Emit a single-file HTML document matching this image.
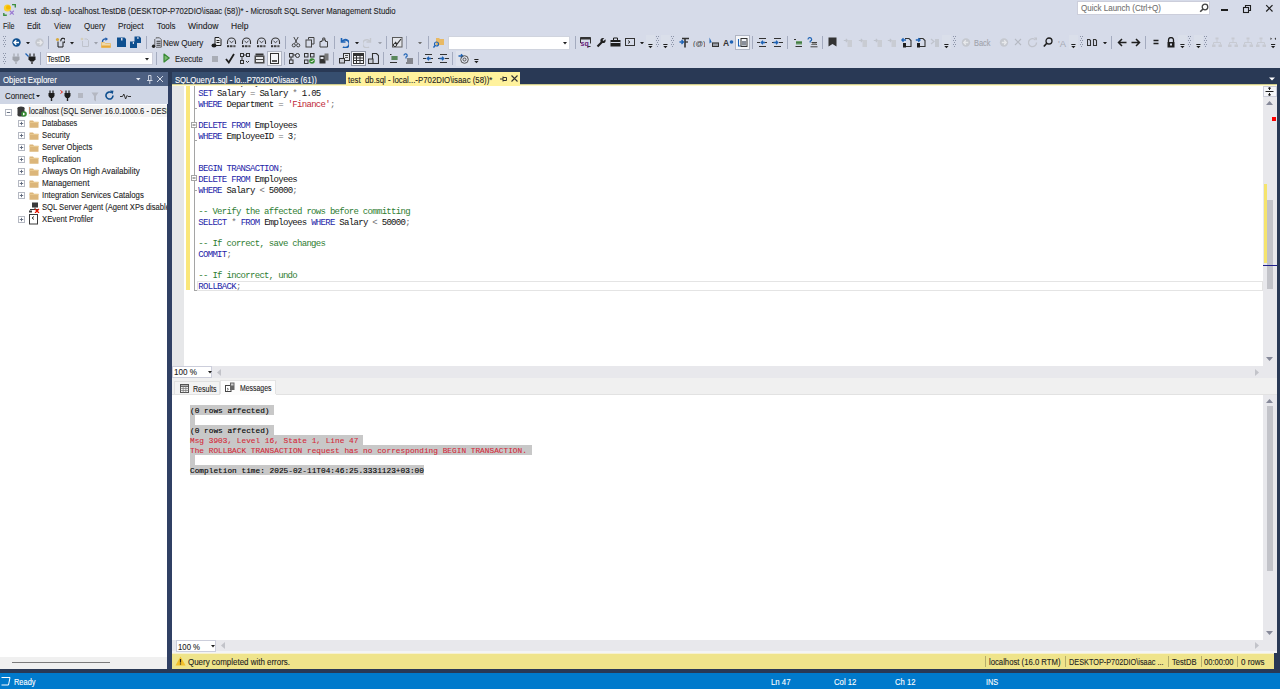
<!DOCTYPE html>
<html><head><meta charset="utf-8">
<style>
*{box-sizing:border-box;margin:0;padding:0}
html,body{width:1280px;height:689px;overflow:hidden;background:#D6DBE9;font-family:'Liberation Sans',sans-serif;position:relative}
.a{position:absolute}
.t{position:absolute;white-space:pre;line-height:1;-webkit-text-stroke:0.1px currentColor}
</style></head>
<body>
<svg class="a" style="left:0px;top:0px;" width="18" height="18" viewBox="0 0 18 18"><circle cx="7.5" cy="8" r="3.6" fill="#F9D030"/><circle cx="8.2" cy="7.4" r="2.2" fill="#F5B800"/><path d="M12 4.6h3.3v3" stroke="#3E8E41" stroke-width="1.4" fill="none"/><path d="M3.8 13v2.3h3" stroke="#3E8E41" stroke-width="1.4" fill="none"/><path d="M9.8 10.8l4 3.8M13.8 10.8l-4 3.8" stroke="#9A7AD2" stroke-width="1.2"/></svg>
<div class="a" style="left:1077px;top:1px;width:133px;height:14px;background:#FFFFFF;border:1px solid #CCCEDB"></div>
<svg class="a" style="left:1199px;top:3px;" width="10" height="10" viewBox="0 0 10 10"><circle cx="6" cy="4" r="2.8" stroke="#424242" stroke-width="1.3" fill="none"/><path d="M4 6 L1.2 8.8" stroke="#424242" stroke-width="1.6"/></svg>
<div class="a" style="left:1221px;top:9px;width:7px;height:2px;background:#1E1E1E;"></div>
<svg class="a" style="left:1242px;top:4px;" width="10" height="10" viewBox="0 0 10 10"><rect x="1.5" y="3.5" width="5" height="5" stroke="#1E1E1E" fill="none" stroke-width="1.1"/><path d="M3.5 3.5v-2h5v5h-2" stroke="#1E1E1E" fill="none" stroke-width="1.1"/></svg>
<svg class="a" style="left:1265px;top:4px;" width="9" height="9" viewBox="0 0 9 9"><path d="M1.2 1.2l6.3 6.3M7.5 1.2l-6.3 6.3" stroke="#1E1E1E" stroke-width="1.2"/></svg>
<svg class="a" style="left:3px;top:36px;" width="3" height="12" viewBox="0 0 3 12"><rect x="0" y="0" width="1" height="1" fill="#8C94A8"/><rect x="2" y="0" width="1" height="1" fill="#8C94A8"/><rect x="1" y="2" width="1" height="1" fill="#8C94A8"/><rect x="1" y="2" width="1" height="1" fill="#8C94A8"/><rect x="0" y="4" width="1" height="1" fill="#8C94A8"/><rect x="2" y="4" width="1" height="1" fill="#8C94A8"/><rect x="1" y="6" width="1" height="1" fill="#8C94A8"/><rect x="1" y="6" width="1" height="1" fill="#8C94A8"/><rect x="0" y="8" width="1" height="1" fill="#8C94A8"/><rect x="2" y="8" width="1" height="1" fill="#8C94A8"/><rect x="1" y="10" width="1" height="1" fill="#8C94A8"/><rect x="1" y="10" width="1" height="1" fill="#8C94A8"/></svg>
<svg class="a" style="left:12px;top:38px;" width="9" height="9" viewBox="0 0 9 9"><circle cx="4.5" cy="4.5" r="4.2" fill="#0E4F8F"/><path d="M2 4.5h5M4.3 2.2L2 4.5l2.3 2.3" stroke="#fff" stroke-width="1.3" fill="none"/></svg>
<svg class="a" style="left:26px;top:41.5px;" width="4" height="2.5" viewBox="0 0 4 2.5"><path d="M0 0h4l-2 2.5z" fill="#1E1E1E"/></svg>
<svg class="a" style="left:35px;top:38px;" width="9" height="9" viewBox="0 0 9 9"><circle cx="4.5" cy="4.5" r="4.2" fill="#C5C8CF"/><path d="M2 4.5h5M4.7 2.2L7 4.5l-2.3 2.3" stroke="#E8E9EC" stroke-width="1.3" fill="none"/></svg>
<div class="a" style="left:48px;top:36px;width:1px;height:13px;background:#A4ABBF;"></div>
<svg class="a" style="left:55px;top:37px;" width="10" height="11" viewBox="0 0 10 11"><circle cx="2.5" cy="2.5" r="1.6" fill="#D9A93A"/><path d="M3 4.5v5.5h5v-5.5" stroke="#1E1E1E" fill="none" stroke-width="1"/><path d="M6 4.2a2.2 2.2 0 1 1 2.6 1.4" stroke="#1E1E1E" fill="none" stroke-width="1.1"/></svg>
<svg class="a" style="left:69.5px;top:42.0px;" width="4" height="2.5" viewBox="0 0 4 2.5"><path d="M0 0h4l-2 2.5z" fill="#1E1E1E"/></svg>
<svg class="a" style="left:80px;top:37px;" width="10" height="11" viewBox="0 0 10 11"><path d="M2.5 4v5.5h6V3.5l-1.5-1.5h-2.5" stroke="#BFC3CC" fill="none" stroke-width="1"/><circle cx="2" cy="2" r="1.3" fill="#D3CDB8"/></svg>
<svg class="a" style="left:93.5px;top:42.0px;" width="4" height="2.5" viewBox="0 0 4 2.5"><path d="M0 0h4l-2 2.5z" fill="#9CA0AA"/></svg>
<svg class="a" style="left:100px;top:37px;" width="12" height="11" viewBox="0 0 12 11"><path d="M1.5 5.5h3l1 1h5v4h-9z" fill="#F0D9A8" stroke="#E8B964" stroke-width="0.8"/><rect x="1.5" y="8.5" width="9" height="2" fill="#E8A838"/><path d="M2.5 5a2.8 2.8 0 0 1 3.5-3" stroke="#1E5AA8" stroke-width="1.4" fill="none"/><path d="M5.5 0.3l2.5 1.8-2.5 1.8z" fill="#1E5AA8"/></svg>
<svg class="a" style="left:117px;top:37px;" width="9" height="10" viewBox="0 0 9 10"><path d="M0 0.5h7.5l1.5 1.5v8H0z" fill="#0E4F8F"/><rect x="4" y="1" width="1.5" height="2.5" fill="#D6DBE9"/></svg>
<svg class="a" style="left:130px;top:36px;" width="11" height="12" viewBox="0 0 11 12"><path d="M4.5 0.5h5l1.5 1.5v5h-6.5z" fill="#0E4F8F"/><rect x="7.3" y="1" width="1.2" height="2" fill="#D6DBE9"/><path d="M0 5.5h5.5l1.5 1.5v5H0z" fill="#0E4F8F"/><rect x="2.8" y="6" width="1.2" height="2" fill="#D6DBE9"/></svg>
<div class="a" style="left:146px;top:36px;width:1px;height:13px;background:#A4ABBF;"></div>
<svg class="a" style="left:151px;top:37px;" width="11" height="11" viewBox="0 0 11 11"><path d="M5 1.5V0.8h3.5l1.8 1.8v7.6H5" stroke="#555" fill="none" stroke-width="0.9"/><path d="M5.5 4.3h4M5.5 6.3h4M5.5 8.3h4" stroke="#333" stroke-width="1.1"/><path d="M3.8 2v7" stroke="#555" stroke-width="0.9"/><circle cx="2.6" cy="9.3" r="1.7" fill="#222"/></svg>
<svg class="a" style="left:211px;top:37px;" width="11" height="11" viewBox="0 0 11 11"><path d="M4 0.5h4l2 2v6H4z" stroke="#1E1E1E" fill="#E8EAEE"/><path d="M5.5 3.5h3M5.5 5.5h3" stroke="#1E1E1E"/><ellipse cx="3" cy="8.5" rx="2.5" ry="2" fill="#1E1E1E"/></svg>
<svg class="a" style="left:226px;top:37px;" width="11" height="11" viewBox="0 0 11 11"><path d="M1.5 7V5a4 4 0 0 1 8 0v2" stroke="#333" fill="none" stroke-width="1.1"/><path d="M3.5 4l2 1.6 2-1.6" stroke="#333" fill="none" stroke-width="0.9"/><rect x="1" y="8.2" width="2.2" height="2" fill="#333"/><rect x="4" y="8.2" width="2.5" height="2" fill="#444"/><rect x="7.3" y="8.2" width="2.2" height="2" fill="#555"/></svg>
<svg class="a" style="left:241px;top:37px;" width="11" height="11" viewBox="0 0 11 11"><path d="M1.5 7V5a4 4 0 0 1 8 0v2" stroke="#333" fill="none" stroke-width="1.1"/><path d="M3.5 4l2 1.6 2-1.6" stroke="#333" fill="none" stroke-width="0.9"/><rect x="1" y="8.2" width="2.2" height="2" fill="#333"/><rect x="4" y="8.2" width="2.5" height="2" fill="#444"/><rect x="7.3" y="8.2" width="2.2" height="2" fill="#555"/></svg>
<svg class="a" style="left:256px;top:37px;" width="11" height="11" viewBox="0 0 11 11"><path d="M1.5 7V5a4 4 0 0 1 8 0v2" stroke="#333" fill="none" stroke-width="1.1"/><path d="M3.5 4l2 1.6 2-1.6" stroke="#333" fill="none" stroke-width="0.9"/><rect x="1" y="8.2" width="2.2" height="2" fill="#333"/><rect x="4" y="8.2" width="2.5" height="2" fill="#444"/><rect x="7.3" y="8.2" width="2.2" height="2" fill="#555"/></svg>
<svg class="a" style="left:270px;top:37px;" width="11" height="11" viewBox="0 0 11 11"><path d="M1.5 7V5a4 4 0 0 1 8 0v2" stroke="#333" fill="none" stroke-width="1.1"/><path d="M3.5 4l2 1.6 2-1.6" stroke="#333" fill="none" stroke-width="0.9"/><rect x="1" y="8.2" width="2.2" height="2" fill="#333"/><rect x="4" y="8.2" width="2.5" height="2" fill="#444"/><rect x="7.3" y="8.2" width="2.2" height="2" fill="#555"/></svg>
<div class="a" style="left:285px;top:36px;width:1px;height:13px;background:#A4ABBF;"></div>
<svg class="a" style="left:291px;top:36px;" width="10" height="12" viewBox="0 0 10 12"><path d="M2.8 1l3.5 6.5M7.2 1L3.7 7.5" stroke="#424242" stroke-width="1"/><circle cx="2.8" cy="9.3" r="1.6" stroke="#424242" fill="none"/><circle cx="7.2" cy="9.3" r="1.6" stroke="#424242" fill="none"/></svg>
<svg class="a" style="left:305px;top:37px;" width="10" height="11" viewBox="0 0 10 11"><path d="M3.5 2.5V0.5h5.5v6.5H7" stroke="#424242" fill="none"/><rect x="1" y="3" width="5.5" height="7" stroke="#424242" fill="none"/></svg>
<svg class="a" style="left:319px;top:37px;" width="10" height="11" viewBox="0 0 10 11"><path d="M1 4.5h2v-1.5h3.5v1.5h2v5.5H1z" stroke="#424242" fill="none"/><path d="M3.8 3V1h2v2" stroke="#424242" fill="none"/></svg>
<div class="a" style="left:334px;top:36px;width:1px;height:13px;background:#A4ABBF;"></div>
<svg class="a" style="left:340px;top:37px;" width="9" height="11" viewBox="0 0 9 11"><path d="M1.5 1v4h4" stroke="#1E63B5" stroke-width="1.6" fill="none"/><path d="M2 4.5a4 4 0 1 1 1 5.5" stroke="#1E63B5" stroke-width="1.8" fill="none"/></svg>
<svg class="a" style="left:355px;top:41.5px;" width="4" height="2.5" viewBox="0 0 4 2.5"><path d="M0 0h4l-2 2.5z" fill="#1E1E1E"/></svg>
<svg class="a" style="left:363px;top:37px;" width="9" height="11" viewBox="0 0 9 11"><path d="M7.5 1v4h-4" stroke="#C5C8CF" stroke-width="1.4" fill="none"/><path d="M7 4.5a4 4 0 1 0-1 5.5" stroke="#C5C8CF" stroke-width="1.4" fill="none"/></svg>
<svg class="a" style="left:378px;top:41.5px;" width="4" height="2.5" viewBox="0 0 4 2.5"><path d="M0 0h4l-2 2.5z" fill="#9CA0AA"/></svg>
<div class="a" style="left:386px;top:36px;width:1px;height:13px;background:#A4ABBF;"></div>
<svg class="a" style="left:392px;top:37px;" width="11" height="11" viewBox="0 0 11 11"><rect x="0.5" y="0.5" width="9.5" height="9.5" stroke="#5A5A5A" fill="#E4E6EB"/><path d="M3 5l2 2 4-5" stroke="#333" stroke-width="1.2" fill="none"/><circle cx="3" cy="8" r="1.6" stroke="#333" fill="none"/></svg>
<div class="a" style="left:406px;top:36px;width:1px;height:13px;background:#A4ABBF;"></div>
<svg class="a" style="left:418px;top:41.5px;" width="4" height="2.5" viewBox="0 0 4 2.5"><path d="M0 0h4l-2 2.5z" fill="#6D6D6D"/></svg>
<div class="a" style="left:428px;top:36px;width:1px;height:13px;background:#A4ABBF;"></div>
<svg class="a" style="left:433px;top:37px;" width="11" height="11" viewBox="0 0 11 11"><path d="M3 1h3l1 1h4v6H3z" fill="#E8B964"/><circle cx="3.5" cy="7" r="2" stroke="#1E63B5" stroke-width="1.2" fill="none"/><path d="M2 8.5L0.5 10.5" stroke="#1E63B5" stroke-width="1.4"/></svg>
<div class="a" style="left:448px;top:35.5px;width:122px;height:14px;background:#FFFFFF;border:1px solid #D0D4DE"></div>
<svg class="a" style="left:563px;top:42.0px;" width="4" height="2.5" viewBox="0 0 4 2.5"><path d="M0 0h4l-2 2.5z" fill="#1E1E1E"/></svg>
<div class="a" style="left:575px;top:36px;width:1px;height:13px;background:#A4ABBF;"></div>
<svg class="a" style="left:580px;top:37px;" width="11" height="11" viewBox="0 0 11 11"><path d="M0.5 6V0.5h10v6" stroke="#333" fill="none"/><rect x="0.5" y="0.5" width="10" height="2" fill="#333"/><text x="0.5" y="9" font-size="7" font-family="Liberation Sans" font-weight="bold" fill="#68217A">sq</text><path d="M7.5 9.5h3" stroke="#333"/></svg>
<svg class="a" style="left:596px;top:37px;" width="10" height="11" viewBox="0 0 10 11"><path d="M1.5 9.5L6 5" stroke="#1E1E1E" stroke-width="2.2"/><circle cx="7" cy="3.5" r="2.6" fill="#1E1E1E"/><path d="M7 3.5l3-3" stroke="#D6DBE9" stroke-width="1.6"/></svg>
<svg class="a" style="left:610px;top:37px;" width="11" height="10" viewBox="0 0 11 10"><rect x="0.5" y="3" width="10" height="6.5" fill="#1E1E1E"/><path d="M3.5 3V1h4v2" stroke="#1E1E1E" fill="none"/><path d="M0.5 5.5h10" stroke="#D6DBE9"/></svg>
<svg class="a" style="left:625px;top:38px;" width="11" height="9" viewBox="0 0 11 9"><rect x="0.5" y="0.5" width="9" height="7" stroke="#333" fill="none"/><path d="M3 2.5l2 1.5-2 1.5" stroke="#333" fill="none"/></svg>
<svg class="a" style="left:640px;top:41.5px;" width="4" height="2.5" viewBox="0 0 4 2.5"><path d="M0 0h4l-2 2.5z" fill="#1E1E1E"/></svg>
<div class="a" style="left:646px;top:35px;width:9px;height:14px;background:#DADFEA;"></div>
<svg class="a" style="left:648px;top:44px;" width="5" height="5" viewBox="0 0 5 5"><rect x="0.3" y="0" width="4.2" height="1" fill="#1E1E1E"/><path d="M0.3 2h4.2l-2.1 2.2z" fill="#1E1E1E"/></svg>
<svg class="a" style="left:656px;top:36px;" width="3" height="12" viewBox="0 0 3 12"><rect x="0" y="0" width="1" height="1" fill="#8C94A8"/><rect x="2" y="0" width="1" height="1" fill="#8C94A8"/><rect x="1" y="2" width="1" height="1" fill="#8C94A8"/><rect x="1" y="2" width="1" height="1" fill="#8C94A8"/><rect x="0" y="4" width="1" height="1" fill="#8C94A8"/><rect x="2" y="4" width="1" height="1" fill="#8C94A8"/><rect x="1" y="6" width="1" height="1" fill="#8C94A8"/><rect x="1" y="6" width="1" height="1" fill="#8C94A8"/><rect x="0" y="8" width="1" height="1" fill="#8C94A8"/><rect x="2" y="8" width="1" height="1" fill="#8C94A8"/><rect x="1" y="10" width="1" height="1" fill="#8C94A8"/><rect x="1" y="10" width="1" height="1" fill="#8C94A8"/></svg>
<div class="a" style="left:661px;top:35px;width:9px;height:14px;background:#DADFEA;"></div>
<svg class="a" style="left:663px;top:44px;" width="5" height="5" viewBox="0 0 5 5"><rect x="0.3" y="0" width="4.2" height="1" fill="#1E1E1E"/><path d="M0.3 2h4.2l-2.1 2.2z" fill="#1E1E1E"/></svg>
<svg class="a" style="left:671px;top:36px;" width="3" height="12" viewBox="0 0 3 12"><rect x="0" y="0" width="1" height="1" fill="#8C94A8"/><rect x="2" y="0" width="1" height="1" fill="#8C94A8"/><rect x="1" y="2" width="1" height="1" fill="#8C94A8"/><rect x="1" y="2" width="1" height="1" fill="#8C94A8"/><rect x="0" y="4" width="1" height="1" fill="#8C94A8"/><rect x="2" y="4" width="1" height="1" fill="#8C94A8"/><rect x="1" y="6" width="1" height="1" fill="#8C94A8"/><rect x="1" y="6" width="1" height="1" fill="#8C94A8"/><rect x="0" y="8" width="1" height="1" fill="#8C94A8"/><rect x="2" y="8" width="1" height="1" fill="#8C94A8"/><rect x="1" y="10" width="1" height="1" fill="#8C94A8"/><rect x="1" y="10" width="1" height="1" fill="#8C94A8"/></svg>
<svg class="a" style="left:679px;top:37px;" width="11" height="11" viewBox="0 0 11 11"><path d="M3 1.5h7M6 1.5v9" stroke="#333" stroke-width="1.6"/><path d="M6 5h3" stroke="#333" stroke-width="1.3"/><path d="M0.5 5h3.5M2.5 3l2 2-2 2" stroke="#1E63B5" stroke-width="1.3" fill="none"/></svg>
<svg class="a" style="left:693px;top:38px;" width="12" height="9" viewBox="0 0 12 9"><text x="0" y="7.5" font-size="7.5" font-family="Liberation Sans" fill="#333">(@)</text></svg>
<svg class="a" style="left:709px;top:37px;" width="11" height="11" viewBox="0 0 11 11"><path d="M0.5 0.5v6l1.8-1.6 1.5 2.5" fill="#1E63B5"/><rect x="3" y="5.5" width="7" height="4.5" fill="#8A8F99" opacity="0.8"/><rect x="3.5" y="6" width="6" height="3.5" stroke="#333" fill="none"/></svg>
<svg class="a" style="left:723px;top:37px;" width="11" height="11" viewBox="0 0 11 11"><text x="0" y="9" font-size="8.5" font-family="Liberation Sans" font-weight="bold" fill="#333">A</text><circle cx="8.5" cy="5" r="1.8" fill="#1E63B5"/></svg>
<div class="a" style="left:735px;top:35px;width:15px;height:15px;background:#F5F6F9;border:1px solid #B0B5C3"></div>
<svg class="a" style="left:737px;top:37px;" width="11" height="11" viewBox="0 0 11 11"><path d="M1.5 2v7h2" stroke="#1E63B5" stroke-width="1.1" fill="none"/><rect x="4" y="1.5" width="6" height="8" stroke="#333" fill="none"/><rect x="5" y="4" width="4" height="4.5" fill="#8A8F99"/></svg>
<div class="a" style="left:752px;top:36px;width:1px;height:13px;background:#A4ABBF;"></div>
<svg class="a" style="left:757px;top:37px;" width="11" height="11" viewBox="0 0 11 11"><path d="M2 1.5h7M0 5.5h3M6 5.5h4M2 9.5h7" stroke="#333" stroke-width="1.1"/><path d="M8 5.5H4.5M6 3.8L4.2 5.5 6 7.2" stroke="#1E63B5" stroke-width="1.3" fill="none"/></svg>
<svg class="a" style="left:772px;top:37px;" width="11" height="11" viewBox="0 0 11 11"><path d="M2 1.5h7M0 5.5h2M7 5.5h4M2 9.5h7" stroke="#333" stroke-width="1.1"/><path d="M1.5 5.5H5.5M4 3.8l1.8 1.7L4 7.2" stroke="#1E63B5" stroke-width="1.3" fill="none"/></svg>
<div class="a" style="left:787px;top:36px;width:1px;height:13px;background:#A4ABBF;"></div>
<svg class="a" style="left:793px;top:37px;" width="10" height="11" viewBox="0 0 10 11"><path d="M1 2.5h2M2.5 9.5h6.5" stroke="#333" stroke-width="1.1"/><rect x="3" y="4" width="6" height="3.5" fill="#6FA36F"/><path d="M3 5.7h6" stroke="#2F5F2F" stroke-width="0.8"/></svg>
<svg class="a" style="left:807px;top:37px;" width="11" height="11" viewBox="0 0 11 11"><path d="M1 2.5a1.8 1.8 0 1 1 2.3 1.7L3 5.5" stroke="#1E63B5" stroke-width="1.2" fill="none"/><path d="M4.5 5.5h5.5M4.5 7.5h5.5M3.5 9.8h7" stroke="#444" stroke-width="1"/><rect x="5" y="6" width="4.5" height="1.5" fill="#999"/></svg>
<div class="a" style="left:822px;top:36px;width:1px;height:13px;background:#A4ABBF;"></div>
<svg class="a" style="left:828px;top:37px;" width="9" height="10" viewBox="0 0 9 10"><path d="M0.5 0.5h8v9L4.5 7l-4 2.5z" fill="#333"/></svg>
<svg class="a" style="left:843px;top:37px;" width="10" height="11" viewBox="0 0 10 11"><path d="M0.8 3.5h3.5M2.8 1.8l1.7 1.7-1.7 1.7" stroke="#BFC3CC" stroke-width="1.1" fill="none"/><rect x="4.5" y="3" width="4.5" height="7" fill="#C9CCD3"/></svg>
<svg class="a" style="left:858px;top:37px;" width="10" height="11" viewBox="0 0 10 11"><path d="M0.8 3.5h3.5M2.8 1.8l1.7 1.7-1.7 1.7" stroke="#BFC3CC" stroke-width="1.1" fill="none"/><rect x="4.5" y="3" width="4.5" height="7" fill="#C9CCD3"/></svg>
<svg class="a" style="left:873px;top:37px;" width="10" height="11" viewBox="0 0 10 11"><path d="M0.8 3.5h3.5M2.8 1.8l1.7 1.7-1.7 1.7" stroke="#BFC3CC" stroke-width="1.1" fill="none"/><rect x="4.5" y="3" width="4.5" height="7" fill="#C9CCD3"/></svg>
<svg class="a" style="left:887px;top:37px;" width="10" height="11" viewBox="0 0 10 11"><path d="M0.8 3.5h3.5M2.8 1.8l1.7 1.7-1.7 1.7" stroke="#BFC3CC" stroke-width="1.1" fill="none"/><rect x="4.5" y="3" width="4.5" height="7" fill="#C9CCD3"/></svg>
<svg class="a" style="left:901px;top:37px;" width="11" height="11" viewBox="0 0 11 11"><path d="M4 1.5h4l2 2v6H5" stroke="#333" fill="none" stroke-width="1.1"/><path d="M5 3H0.8M2.5 1.3L0.8 3l1.7 1.7" stroke="#1E63B5" stroke-width="1.3" fill="none"/><rect x="2" y="6" width="3" height="4.5" fill="#1E1E1E"/></svg>
<svg class="a" style="left:915px;top:37px;" width="11" height="11" viewBox="0 0 11 11"><path d="M4 1.5h4l2 2v6H5" stroke="#333" fill="none" stroke-width="1.1"/><path d="M0.8 3H5M3.3 1.3L5 3 3.3 4.7" stroke="#1E63B5" stroke-width="1.3" fill="none"/><rect x="2" y="6" width="3" height="4.5" fill="#1E1E1E"/></svg>
<svg class="a" style="left:930px;top:37px;" width="10" height="11" viewBox="0 0 10 11"><path d="M1 2l3 2.5L1 7" stroke="#BFC3CC" stroke-width="1.2" fill="none"/><rect x="5" y="2" width="4" height="8" fill="#C4C8D0"/></svg>
<div class="a" style="left:942px;top:35px;width:9px;height:14px;background:#DADFEA;"></div>
<svg class="a" style="left:944px;top:44px;" width="5" height="5" viewBox="0 0 5 5"><rect x="0.3" y="0" width="4.2" height="1" fill="#1E1E1E"/><path d="M0.3 2h4.2l-2.1 2.2z" fill="#1E1E1E"/></svg>
<svg class="a" style="left:953px;top:36px;" width="3" height="12" viewBox="0 0 3 12"><rect x="0" y="0" width="1" height="1" fill="#8C94A8"/><rect x="2" y="0" width="1" height="1" fill="#8C94A8"/><rect x="1" y="2" width="1" height="1" fill="#8C94A8"/><rect x="1" y="2" width="1" height="1" fill="#8C94A8"/><rect x="0" y="4" width="1" height="1" fill="#8C94A8"/><rect x="2" y="4" width="1" height="1" fill="#8C94A8"/><rect x="1" y="6" width="1" height="1" fill="#8C94A8"/><rect x="1" y="6" width="1" height="1" fill="#8C94A8"/><rect x="0" y="8" width="1" height="1" fill="#8C94A8"/><rect x="2" y="8" width="1" height="1" fill="#8C94A8"/><rect x="1" y="10" width="1" height="1" fill="#8C94A8"/><rect x="1" y="10" width="1" height="1" fill="#8C94A8"/></svg>
<svg class="a" style="left:961px;top:37px;" width="11" height="11" viewBox="0 0 11 11"><circle cx="5" cy="5.5" r="4.2" fill="#C5C8CF"/><path d="M2.8 5.5h4.5M4.8 3.3L2.8 5.5l2 2.2" stroke="#E8E9EC" stroke-width="1.3" fill="none"/></svg>
<svg class="a" style="left:999px;top:37px;" width="10" height="11" viewBox="0 0 10 11"><circle cx="5" cy="5.5" r="4.2" fill="#C5C8CF"/><path d="M2.8 5.5h4.5M5.2 3.3l2 2.2-2 2.2" stroke="#E8E9EC" stroke-width="1.3" fill="none"/></svg>
<svg class="a" style="left:1014px;top:38px;" width="8" height="8" viewBox="0 0 8 8"><path d="M1 1l6 6M7 1L1 7" stroke="#B5B9C2" stroke-width="1.1"/></svg>
<svg class="a" style="left:1028px;top:37px;" width="10" height="11" viewBox="0 0 10 11"><path d="M7.5 3a4 4 0 1 0 1 2.5" stroke="#C0C3CB" stroke-width="1.3" fill="none"/><path d="M6 0.5h3v3" fill="#C0C3CB"/></svg>
<svg class="a" style="left:1043px;top:37px;" width="10" height="11" viewBox="0 0 10 11"><circle cx="6" cy="4" r="3" stroke="#1E1E1E" stroke-width="1.3" fill="none"/><path d="M3.8 6.2L0.8 9.5" stroke="#1E1E1E" stroke-width="1.7"/></svg>
<svg class="a" style="left:1058px;top:37px;" width="10" height="11" viewBox="0 0 10 11"><text x="0" y="9.5" font-size="9.5" font-family="Liberation Sans" fill="#A6AAB3">'A</text></svg>
<div class="a" style="left:1069px;top:35px;width:9px;height:14px;background:#DADFEA;"></div>
<svg class="a" style="left:1071px;top:44px;" width="5" height="5" viewBox="0 0 5 5"><rect x="0.3" y="0" width="4.2" height="1" fill="#1E1E1E"/><path d="M0.3 2h4.2l-2.1 2.2z" fill="#1E1E1E"/></svg>
<svg class="a" style="left:1080px;top:36px;" width="3" height="12" viewBox="0 0 3 12"><rect x="0" y="0" width="1" height="1" fill="#8C94A8"/><rect x="2" y="0" width="1" height="1" fill="#8C94A8"/><rect x="1" y="2" width="1" height="1" fill="#8C94A8"/><rect x="1" y="2" width="1" height="1" fill="#8C94A8"/><rect x="0" y="4" width="1" height="1" fill="#8C94A8"/><rect x="2" y="4" width="1" height="1" fill="#8C94A8"/><rect x="1" y="6" width="1" height="1" fill="#8C94A8"/><rect x="1" y="6" width="1" height="1" fill="#8C94A8"/><rect x="0" y="8" width="1" height="1" fill="#8C94A8"/><rect x="2" y="8" width="1" height="1" fill="#8C94A8"/><rect x="1" y="10" width="1" height="1" fill="#8C94A8"/><rect x="1" y="10" width="1" height="1" fill="#8C94A8"/></svg>
<svg class="a" style="left:1087px;top:38px;" width="12" height="9" viewBox="0 0 12 9"><path d="M0.5 1.5h2l1 1v5H0.5zM6.5 1.5h2l1 1v5h-3z" stroke="#333" stroke-width="1.1" fill="none"/></svg>
<svg class="a" style="left:1103px;top:41.5px;" width="4" height="2.5" viewBox="0 0 4 2.5"><path d="M0 0h4l-2 2.5z" fill="#1E1E1E"/></svg>
<div class="a" style="left:1111px;top:36px;width:1px;height:13px;background:#A4ABBF;"></div>
<svg class="a" style="left:1117px;top:38px;" width="10" height="9" viewBox="0 0 10 9"><path d="M9.5 4.5H1.5M5 1L1.5 4.5 5 8" stroke="#1E1E1E" stroke-width="1.5" fill="none"/></svg>
<svg class="a" style="left:1131px;top:38px;" width="10" height="9" viewBox="0 0 10 9"><path d="M0.5 4.5h8M5 1l3.5 3.5L5 8" stroke="#1E1E1E" stroke-width="1.5" fill="none"/></svg>
<div class="a" style="left:1145px;top:36px;width:1px;height:13px;background:#A4ABBF;"></div>
<svg class="a" style="left:1153px;top:39px;" width="6" height="6" viewBox="0 0 6 6"><path d="M0.5 1.5h5M0.5 4.5h5" stroke="#1E1E1E" stroke-width="1.3"/></svg>
<svg class="a" style="left:1167px;top:37px;" width="8" height="11" viewBox="0 0 8 11"><path d="M1.5 5V3a2.5 2.5 0 0 1 5 0v2" stroke="#1E1E1E" stroke-width="1.3" fill="none"/><rect x="0.5" y="5" width="7" height="5.5" fill="#1E1E1E"/><rect x="3" y="6.5" width="2" height="2" fill="#D6DBE9"/></svg>
<div class="a" style="left:1178px;top:35px;width:9px;height:14px;background:#DADFEA;"></div>
<svg class="a" style="left:1180px;top:44px;" width="5" height="5" viewBox="0 0 5 5"><rect x="0.3" y="0" width="4.2" height="1" fill="#1E1E1E"/><path d="M0.3 2h4.2l-2.1 2.2z" fill="#1E1E1E"/></svg>
<svg class="a" style="left:1188px;top:36px;" width="3" height="12" viewBox="0 0 3 12"><rect x="0" y="0" width="1" height="1" fill="#8C94A8"/><rect x="2" y="0" width="1" height="1" fill="#8C94A8"/><rect x="1" y="2" width="1" height="1" fill="#8C94A8"/><rect x="1" y="2" width="1" height="1" fill="#8C94A8"/><rect x="0" y="4" width="1" height="1" fill="#8C94A8"/><rect x="2" y="4" width="1" height="1" fill="#8C94A8"/><rect x="1" y="6" width="1" height="1" fill="#8C94A8"/><rect x="1" y="6" width="1" height="1" fill="#8C94A8"/><rect x="0" y="8" width="1" height="1" fill="#8C94A8"/><rect x="2" y="8" width="1" height="1" fill="#8C94A8"/><rect x="1" y="10" width="1" height="1" fill="#8C94A8"/><rect x="1" y="10" width="1" height="1" fill="#8C94A8"/></svg>
<div class="a" style="left:1194px;top:35px;width:9px;height:14px;background:#DADFEA;"></div>
<svg class="a" style="left:1196px;top:44px;" width="5" height="5" viewBox="0 0 5 5"><rect x="0.3" y="0" width="4.2" height="1" fill="#1E1E1E"/><path d="M0.3 2h4.2l-2.1 2.2z" fill="#1E1E1E"/></svg>
<svg class="a" style="left:1204px;top:36px;" width="3" height="12" viewBox="0 0 3 12"><rect x="0" y="0" width="1" height="1" fill="#8C94A8"/><rect x="2" y="0" width="1" height="1" fill="#8C94A8"/><rect x="1" y="2" width="1" height="1" fill="#8C94A8"/><rect x="1" y="2" width="1" height="1" fill="#8C94A8"/><rect x="0" y="4" width="1" height="1" fill="#8C94A8"/><rect x="2" y="4" width="1" height="1" fill="#8C94A8"/><rect x="1" y="6" width="1" height="1" fill="#8C94A8"/><rect x="1" y="6" width="1" height="1" fill="#8C94A8"/><rect x="0" y="8" width="1" height="1" fill="#8C94A8"/><rect x="2" y="8" width="1" height="1" fill="#8C94A8"/><rect x="1" y="10" width="1" height="1" fill="#8C94A8"/><rect x="1" y="10" width="1" height="1" fill="#8C94A8"/></svg>
<svg class="a" style="left:1212px;top:37px;" width="10" height="11" viewBox="0 0 10 11"><rect x="3.5" y="0.5" width="3" height="2" fill="#C7CAD2"/><path d="M5 2.5v3M1.5 5.5h7M1.5 5.5v2M8.5 5.5v2" stroke="#C7CAD2" fill="none"/><rect x="0" y="7.5" width="3.5" height="2.5" fill="#C7CAD2"/><rect x="6.5" y="7.5" width="3.5" height="2.5" fill="#C7CAD2"/></svg>
<svg class="a" style="left:1228px;top:37px;" width="10" height="11" viewBox="0 0 10 11"><rect x="3.5" y="0.5" width="3" height="2" fill="#C7CAD2"/><path d="M5 2.5v3M1.5 5.5h7M1.5 5.5v2M8.5 5.5v2" stroke="#C7CAD2" fill="none"/><rect x="0" y="7.5" width="3.5" height="2.5" fill="#C7CAD2"/><rect x="6.5" y="7.5" width="3.5" height="2.5" fill="#C7CAD2"/></svg>
<svg class="a" style="left:1243px;top:37px;" width="10" height="11" viewBox="0 0 10 11"><rect x="3.5" y="0.5" width="3" height="2" fill="#C7CAD2"/><path d="M5 2.5v3M1.5 5.5h7M1.5 5.5v2M8.5 5.5v2" stroke="#C7CAD2" fill="none"/><rect x="0" y="7.5" width="3.5" height="2.5" fill="#C7CAD2"/><rect x="6.5" y="7.5" width="3.5" height="2.5" fill="#C7CAD2"/></svg>
<svg class="a" style="left:1256px;top:37px;" width="10" height="11" viewBox="0 0 10 11"><rect x="3.5" y="0.5" width="3" height="2" fill="#C7CAD2"/><path d="M5 2.5v3M1.5 5.5h7M1.5 5.5v2M8.5 5.5v2" stroke="#C7CAD2" fill="none"/><rect x="0" y="7.5" width="3.5" height="2.5" fill="#C7CAD2"/><rect x="6.5" y="7.5" width="3.5" height="2.5" fill="#C7CAD2"/></svg>
<svg class="a" style="left:1270px;top:37px;" width="7" height="12" viewBox="0 0 7 12"><path d="M0.5 0.5l1.5 1.2-1.5 1.2zM6 0.5l-1.5 1.2 1.5 1.2z" fill="#333"/><rect x="1" y="7" width="4.2" height="1" fill="#1E1E1E"/><path d="M1 9h4.2l-2.1 2.2z" fill="#1E1E1E"/></svg>
<svg class="a" style="left:3px;top:53px;" width="3" height="12" viewBox="0 0 3 12"><rect x="0" y="0" width="1" height="1" fill="#8C94A8"/><rect x="2" y="0" width="1" height="1" fill="#8C94A8"/><rect x="1" y="2" width="1" height="1" fill="#8C94A8"/><rect x="1" y="2" width="1" height="1" fill="#8C94A8"/><rect x="0" y="4" width="1" height="1" fill="#8C94A8"/><rect x="2" y="4" width="1" height="1" fill="#8C94A8"/><rect x="1" y="6" width="1" height="1" fill="#8C94A8"/><rect x="1" y="6" width="1" height="1" fill="#8C94A8"/><rect x="0" y="8" width="1" height="1" fill="#8C94A8"/><rect x="2" y="8" width="1" height="1" fill="#8C94A8"/><rect x="1" y="10" width="1" height="1" fill="#8C94A8"/><rect x="1" y="10" width="1" height="1" fill="#8C94A8"/></svg>
<svg class="a" style="left:12px;top:53px;" width="8" height="11" viewBox="0 0 8 11"><path d="M2 0.5v3M6 0.5v3" stroke="#9FA3AC" stroke-width="1.1"/><path d="M0.5 3.5h7v3l-2 2h-3l-2-2z" fill="#9FA3AC"/><path d="M4 8.5v2.5" stroke="#9FA3AC" stroke-width="1.2"/></svg>
<svg class="a" style="left:25px;top:53px;" width="11" height="11" viewBox="0 0 11 11"><path d="M0.5 0.5l3 3" stroke="#1E63B5" stroke-width="1.3"/><path d="M5 0.5v3M9 0.5v3" stroke="#1E1E1E" stroke-width="1.1"/><path d="M3.5 3.5h7v3l-2 2h-3l-2-2z" fill="#1E1E1E"/><path d="M7 8.5v2.5" stroke="#1E1E1E" stroke-width="1.3"/></svg>
<div class="a" style="left:40px;top:52px;width:1px;height:13px;background:#A4ABBF;"></div>
<div class="a" style="left:46px;top:52px;width:107px;height:13px;background:#FFFFFF;border:1px solid #CCCEDB"></div>
<svg class="a" style="left:145px;top:58.0px;" width="4" height="2.5" viewBox="0 0 4 2.5"><path d="M0 0h4l-2 2.5z" fill="#1E1E1E"/></svg>
<div class="a" style="left:156px;top:52px;width:1px;height:13px;background:#A4ABBF;"></div>
<svg class="a" style="left:163px;top:53px;" width="7" height="10" viewBox="0 0 7 10"><path d="M1 1L6.2 5 1 9z" fill="#7BB86F" stroke="#388A34" stroke-width="1.2" stroke-linejoin="round"/></svg>
<div class="a" style="left:212px;top:56px;width:6px;height:6px;background:#A9ADB6;"></div>
<svg class="a" style="left:225px;top:53px;" width="10" height="11" viewBox="0 0 10 11"><path d="M1 6l2.8 3.5L9 1" stroke="#1E1E1E" stroke-width="1.8" fill="none"/></svg>
<svg class="a" style="left:240px;top:53px;" width="10" height="11" viewBox="0 0 10 11"><rect x="0.5" y="0.5" width="3" height="3" stroke="#333" fill="none"/><rect x="6.5" y="0.5" width="3" height="3" stroke="#333" fill="none"/><rect x="0.5" y="7.5" width="3" height="3" stroke="#333" fill="none"/><path d="M2 3.5v4M3.5 2h3" stroke="#333"/><path d="M6 8l1.5 1.5L9 8" stroke="#333" fill="none"/></svg>
<svg class="a" style="left:254px;top:53px;" width="11" height="11" viewBox="0 0 11 11"><rect x="1.5" y="0.5" width="8" height="2" fill="#333"/><rect x="0.5" y="2.5" width="10" height="8" fill="#4A4A4A"/><rect x="2" y="4" width="7" height="2" fill="#E8E9EC"/><rect x="2" y="7" width="7" height="2" fill="#E8E9EC"/></svg>
<div class="a" style="left:267px;top:51px;width:15px;height:15px;background:#F5F6F9;border:1px solid #B0B5C3"></div>
<svg class="a" style="left:269px;top:53px;" width="11" height="11" viewBox="0 0 11 11"><rect x="1.5" y="0.5" width="8" height="10" stroke="#333" fill="none"/><rect x="3" y="7" width="5" height="2" fill="#555"/></svg>
<div class="a" style="left:284px;top:52px;width:1px;height:13px;background:#A4ABBF;"></div>
<svg class="a" style="left:289px;top:53px;" width="11" height="11" viewBox="0 0 11 11"><rect x="0.5" y="0.5" width="3.5" height="3.5" stroke="#333" fill="none"/><rect x="0.5" y="7" width="3.5" height="3.5" stroke="#333" fill="none"/><path d="M2 4v3M4 2h3" stroke="#333"/><circle cx="8.5" cy="2.5" r="2" stroke="#333" fill="none"/></svg>
<svg class="a" style="left:304px;top:53px;" width="11" height="11" viewBox="0 0 11 11"><rect x="0.5" y="0.5" width="3.5" height="3.5" stroke="#333" fill="none"/><rect x="6.5" y="0.5" width="3.5" height="3.5" stroke="#333" fill="none"/><rect x="0.5" y="7" width="3.5" height="3.5" stroke="#333" fill="none"/><circle cx="8" cy="8" r="2.8" fill="#388A34"/><path d="M6.7 8l1 1 1.8-2" stroke="#fff" fill="none"/></svg>
<svg class="a" style="left:319px;top:53px;" width="10" height="11" viewBox="0 0 10 11"><rect x="0.5" y="2.5" width="6" height="8" fill="#333"/><rect x="5.5" y="0.5" width="4" height="7" fill="#777"/><rect x="1.5" y="4" width="3" height="2" fill="#E4E6EB"/></svg>
<div class="a" style="left:333px;top:52px;width:1px;height:13px;background:#A4ABBF;"></div>
<svg class="a" style="left:339px;top:53px;" width="11" height="11" viewBox="0 0 11 11"><rect x="4.5" y="0.5" width="6" height="7" stroke="#333" fill="#E4E6EB"/><path d="M6 2.5h3M6 4.5h3" stroke="#555"/><rect x="0.5" y="5.5" width="5" height="4.5" stroke="#333" fill="#C9CCD4"/></svg>
<div class="a" style="left:351px;top:51px;width:15px;height:15px;background:#F5F6F9;border:1px solid #8D93A3"></div>
<svg class="a" style="left:353px;top:53px;" width="11" height="11" viewBox="0 0 11 11"><rect x="0.5" y="0.5" width="10" height="10" stroke="#333" fill="none"/><rect x="0.5" y="0.5" width="10" height="2.5" fill="#333"/><path d="M0.5 5h10M0.5 7.5h10M3.5 3v7.5M7 3v7.5" stroke="#333"/></svg>
<svg class="a" style="left:368px;top:53px;" width="11" height="11" viewBox="0 0 11 11"><path d="M4.5 0.5h4l2 2v8h-6z" stroke="#333" fill="none" stroke-width="1.1"/><rect x="0.5" y="6" width="4.5" height="4.5" stroke="#333" fill="#C9CCD4"/></svg>
<div class="a" style="left:383px;top:52px;width:1px;height:13px;background:#A4ABBF;"></div>
<svg class="a" style="left:389px;top:53px;" width="9" height="11" viewBox="0 0 9 11"><path d="M1 1.5h1.5M2.5 4h6M2.5 6h6M1 9.5h7" stroke="#333" stroke-width="1.1"/><rect x="2.5" y="3" width="6" height="4" fill="#388A34" opacity="0.55"/></svg>
<svg class="a" style="left:403px;top:53px;" width="11" height="11" viewBox="0 0 11 11"><path d="M1 2.5a1.6 1.6 0 1 1 2 1.5v1.5" stroke="#1E63B5" stroke-width="1.2" fill="none"/><path d="M4 6h6M4 8h6M3 10h7" stroke="#333" stroke-width="1.1"/></svg>
<div class="a" style="left:418px;top:52px;width:1px;height:13px;background:#A4ABBF;"></div>
<svg class="a" style="left:423px;top:53px;" width="11" height="11" viewBox="0 0 11 11"><path d="M2 1.5h7M0 5.5h3M6 5.5h4M2 9.5h7" stroke="#333" stroke-width="1.1"/><path d="M8 5.5H4.5M6 3.8L4.2 5.5 6 7.2" stroke="#1E63B5" stroke-width="1.3" fill="none"/></svg>
<svg class="a" style="left:438px;top:53px;" width="11" height="11" viewBox="0 0 11 11"><path d="M2 1.5h7M0 5.5h2M7 5.5h4M2 9.5h7" stroke="#333" stroke-width="1.1"/><path d="M1.5 5.5H5.5M4 3.8l1.8 1.7L4 7.2" stroke="#1E63B5" stroke-width="1.3" fill="none"/></svg>
<div class="a" style="left:452px;top:52px;width:1px;height:13px;background:#A4ABBF;"></div>
<div class="a" style="left:456px;top:51px;width:14px;height:15px;background:#DEE2EC;"></div>
<svg class="a" style="left:458px;top:53px;" width="11" height="11" viewBox="0 0 11 11"><path d="M0.5 3h4M3 1.2L4.8 3 3 4.8" stroke="#1E63B5" stroke-width="1.3" fill="none"/><circle cx="6.5" cy="6.5" r="3.8" stroke="#555" fill="none"/><circle cx="6.5" cy="6.5" r="1.5" stroke="#555" fill="none"/></svg>
<svg class="a" style="left:474px;top:59px;" width="5" height="5" viewBox="0 0 5 5"><rect x="0.3" y="0" width="4.2" height="1" fill="#1E1E1E"/><path d="M0.3 2h4.2l-2.1 2.2z" fill="#1E1E1E"/></svg>
<div class="a" style="left:0px;top:68px;width:1280px;height:605px;background:#293955;"></div>
<div class="a" style="left:167px;top:86px;width:6px;height:583px;background:#304064;"></div>
<div class="a" style="left:0px;top:72px;width:168px;height:14px;background:#4D6082;"></div>
<svg class="a" style="left:136px;top:77.5px;" width="5" height="3" viewBox="0 0 5 3"><path d="M0 0h4.5l-2.25 2.5z" fill="#E6EAF2"/></svg>
<svg class="a" style="left:146px;top:75px;" width="7" height="10" viewBox="0 0 7 10"><path d="M2.5 0.5h2.5v5h-2.5zM1 5.5h5.5M3.8 5.5v3.5" stroke="#D8DDE8" stroke-width="0.9" fill="none"/></svg>
<svg class="a" style="left:156px;top:75px;" width="8" height="8" viewBox="0 0 8 8"><path d="M1 1l6 6M7 1l-6 6" stroke="#E6EAF2" stroke-width="0.9"/></svg>
<div class="a" style="left:0px;top:86px;width:168px;height:18px;background:#CFD6E5;"></div>
<svg class="a" style="left:36px;top:94.5px;" width="4" height="2.5" viewBox="0 0 4 2.5"><path d="M0 0h4l-2 2.5z" fill="#1E1E1E"/></svg>
<svg class="a" style="left:47.5px;top:90px;" width="7" height="11" viewBox="0 0 7 11"><path d="M2 0.5v3M5 0.5v3" stroke="#1E1E1E" stroke-width="1.2"/><path d="M0.5 3h6v3l-1.5 2h-3L0.5 6z" fill="#1E1E1E"/><path d="M3.5 8v3" stroke="#1E1E1E" stroke-width="1.4"/></svg>
<svg class="a" style="left:60px;top:90px;" width="11" height="11" viewBox="0 0 11 11"><path d="M0.5 0.5l2 1.5-2 1.5" stroke="#E51400" stroke-width="0.9" fill="none"/><path d="M6 0.5v3M9 0.5v3" stroke="#1E1E1E" stroke-width="1.2"/><path d="M4.5 3h6v3l-1.5 2h-3L4.5 6z" fill="#1E1E1E"/><path d="M7.5 8v3" stroke="#1E1E1E" stroke-width="1.4"/></svg>
<div class="a" style="left:78px;top:93px;width:5px;height:5px;background:#B4B8C2;"></div>
<svg class="a" style="left:91px;top:92px;" width="8" height="10" viewBox="0 0 8 10"><path d="M0.5 0.5h7L5 4v5.5L3 8V4z" fill="#B4B8C2"/></svg>
<svg class="a" style="left:105px;top:90px;" width="10" height="11" viewBox="0 0 10 11"><path d="M8 5.5a3.5 3.5 0 1 1-1.2-2.6" stroke="#0E4F8F" stroke-width="1.6" fill="none"/><path d="M5 0.5l3.5 0.3-0.8 3.4z" fill="#0E4F8F"/></svg>
<svg class="a" style="left:120px;top:92px;" width="11" height="8" viewBox="0 0 11 8"><path d="M0 4.5h2.5l1.3-2.5 1.8 5 1.5-3.5 1 1h3" stroke="#333" stroke-width="1" fill="none"/></svg>
<div class="a" style="left:0px;top:104px;width:167px;height:553px;background:#FFFFFF;"></div>
<div class="a" style="left:28px;top:105px;width:139px;height:12px;background:#F4F4F4;"></div>
<svg class="a" style="left:5px;top:109px;" width="7" height="7" viewBox="0 0 7 7"><rect x="0.5" y="0.5" width="6" height="6" stroke="#B4B8C2" fill="#FFFFFF"/><path d="M1.8 3.5h3.4" stroke="#5A6478" stroke-width="0.9"/></svg>
<svg class="a" style="left:17px;top:106px;" width="10" height="11" viewBox="0 0 10 11"><ellipse cx="4" cy="2" rx="3.5" ry="1.6" fill="#3A3A3A"/><rect x="0.5" y="2" width="7" height="7" fill="#3A3A3A"/><ellipse cx="4" cy="9" rx="3.5" ry="1.6" fill="#3A3A3A"/><circle cx="7" cy="8" r="2.8" fill="#388A34"/><path d="M6 6.5v3l2.3-1.5z" fill="#fff"/></svg>
<svg class="a" style="left:18px;top:120px;" width="7" height="7" viewBox="0 0 7 7"><rect x="0.5" y="0.5" width="6" height="6" stroke="#B4B8C2" fill="#FFFFFF"/><path d="M1.8 3.5h3.4" stroke="#5A6478" stroke-width="0.9"/><path d="M3.5 1.8v3.4" stroke="#5A6478" stroke-width="0.9"/></svg>
<svg class="a" style="left:29px;top:119px;" width="10" height="9" viewBox="0 0 10 9"><path d="M0.5 1.5h3.5l1 1.2h4.5v6H0.5z" fill="#DCB67A"/><path d="M0.5 3.5h9" stroke="#E8C88E"/></svg>
<svg class="a" style="left:18px;top:132px;" width="7" height="7" viewBox="0 0 7 7"><rect x="0.5" y="0.5" width="6" height="6" stroke="#B4B8C2" fill="#FFFFFF"/><path d="M1.8 3.5h3.4" stroke="#5A6478" stroke-width="0.9"/><path d="M3.5 1.8v3.4" stroke="#5A6478" stroke-width="0.9"/></svg>
<svg class="a" style="left:29px;top:131px;" width="10" height="9" viewBox="0 0 10 9"><path d="M0.5 1.5h3.5l1 1.2h4.5v6H0.5z" fill="#DCB67A"/><path d="M0.5 3.5h9" stroke="#E8C88E"/></svg>
<svg class="a" style="left:18px;top:144px;" width="7" height="7" viewBox="0 0 7 7"><rect x="0.5" y="0.5" width="6" height="6" stroke="#B4B8C2" fill="#FFFFFF"/><path d="M1.8 3.5h3.4" stroke="#5A6478" stroke-width="0.9"/><path d="M3.5 1.8v3.4" stroke="#5A6478" stroke-width="0.9"/></svg>
<svg class="a" style="left:29px;top:143px;" width="10" height="9" viewBox="0 0 10 9"><path d="M0.5 1.5h3.5l1 1.2h4.5v6H0.5z" fill="#DCB67A"/><path d="M0.5 3.5h9" stroke="#E8C88E"/></svg>
<svg class="a" style="left:18px;top:156px;" width="7" height="7" viewBox="0 0 7 7"><rect x="0.5" y="0.5" width="6" height="6" stroke="#B4B8C2" fill="#FFFFFF"/><path d="M1.8 3.5h3.4" stroke="#5A6478" stroke-width="0.9"/><path d="M3.5 1.8v3.4" stroke="#5A6478" stroke-width="0.9"/></svg>
<svg class="a" style="left:29px;top:155px;" width="10" height="9" viewBox="0 0 10 9"><path d="M0.5 1.5h3.5l1 1.2h4.5v6H0.5z" fill="#DCB67A"/><path d="M0.5 3.5h9" stroke="#E8C88E"/></svg>
<svg class="a" style="left:18px;top:168px;" width="7" height="7" viewBox="0 0 7 7"><rect x="0.5" y="0.5" width="6" height="6" stroke="#B4B8C2" fill="#FFFFFF"/><path d="M1.8 3.5h3.4" stroke="#5A6478" stroke-width="0.9"/><path d="M3.5 1.8v3.4" stroke="#5A6478" stroke-width="0.9"/></svg>
<svg class="a" style="left:29px;top:167px;" width="10" height="9" viewBox="0 0 10 9"><path d="M0.5 1.5h3.5l1 1.2h4.5v6H0.5z" fill="#DCB67A"/><path d="M0.5 3.5h9" stroke="#E8C88E"/></svg>
<svg class="a" style="left:18px;top:180px;" width="7" height="7" viewBox="0 0 7 7"><rect x="0.5" y="0.5" width="6" height="6" stroke="#B4B8C2" fill="#FFFFFF"/><path d="M1.8 3.5h3.4" stroke="#5A6478" stroke-width="0.9"/><path d="M3.5 1.8v3.4" stroke="#5A6478" stroke-width="0.9"/></svg>
<svg class="a" style="left:29px;top:179px;" width="10" height="9" viewBox="0 0 10 9"><path d="M0.5 1.5h3.5l1 1.2h4.5v6H0.5z" fill="#DCB67A"/><path d="M0.5 3.5h9" stroke="#E8C88E"/></svg>
<svg class="a" style="left:18px;top:192px;" width="7" height="7" viewBox="0 0 7 7"><rect x="0.5" y="0.5" width="6" height="6" stroke="#B4B8C2" fill="#FFFFFF"/><path d="M1.8 3.5h3.4" stroke="#5A6478" stroke-width="0.9"/><path d="M3.5 1.8v3.4" stroke="#5A6478" stroke-width="0.9"/></svg>
<svg class="a" style="left:29px;top:191px;" width="10" height="9" viewBox="0 0 10 9"><path d="M0.5 1.5h3.5l1 1.2h4.5v6H0.5z" fill="#DCB67A"/><path d="M0.5 3.5h9" stroke="#E8C88E"/></svg>
<svg class="a" style="left:29px;top:202px;" width="11" height="11" viewBox="0 0 11 11"><rect x="3" y="0.5" width="6" height="5" fill="#3A3A3A"/><path d="M6 5.5v2M1 7.5h8" stroke="#3A3A3A"/><rect x="0" y="8.5" width="3" height="2" fill="#3A3A3A"/><path d="M6 7l4 4M10 7l-4 4" stroke="#E51400" stroke-width="1.2"/></svg>
<svg class="a" style="left:18px;top:216px;" width="7" height="7" viewBox="0 0 7 7"><rect x="0.5" y="0.5" width="6" height="6" stroke="#B4B8C2" fill="#FFFFFF"/><path d="M1.8 3.5h3.4" stroke="#5A6478" stroke-width="0.9"/><path d="M3.5 1.8v3.4" stroke="#5A6478" stroke-width="0.9"/></svg>
<svg class="a" style="left:29px;top:214px;" width="10" height="11" viewBox="0 0 10 11"><rect x="0.5" y="0.5" width="8" height="9.5" stroke="#3A3A3A" fill="#fff"/><path d="M5 2.5L3 4l2 1.5" stroke="#3A3A3A" fill="none"/></svg>
<div class="a" style="left:0px;top:657px;width:167px;height:12px;background:#F0F0F0;"></div>
<div class="a" style="left:12px;top:662px;width:98px;height:1px;background:#7A7A7A;"></div>
<div class="a" style="left:172px;top:72px;width:174px;height:12px;background:#364E6F;"></div>
<div class="a" style="left:346px;top:72px;width:174px;height:14px;background:#FFF29D;"></div>
<svg class="a" style="left:499px;top:75px;" width="9" height="8" viewBox="0 0 9 8"><path d="M1 4h3M4 1.5v5M4 2.5h3.5v3H4" stroke="#333" fill="none"/></svg>
<svg class="a" style="left:510px;top:74px;" width="9" height="9" viewBox="0 0 9 9"><path d="M1.5 1.5l6 6M7.5 1.5l-6 6" stroke="#333" stroke-width="1.1"/></svg>
<svg class="a" style="left:1268px;top:76px;" width="8" height="6" viewBox="0 0 8 6"><path d="M1 1.5h6l-3 3z" fill="#FFFFFF"/></svg>
<div class="a" style="left:172px;top:84px;width:1105px;height:1px;background:#CFCB8E;"></div>
<div class="a" style="left:172px;top:85px;width:1105px;height:1px;background:#FFF8C8;"></div>
<div class="a" style="left:346px;top:84px;width:174px;height:2px;background:#FFF29D;"></div>
<div class="a" style="left:172px;top:86px;width:1105px;height:280px;background:#FFFFFF;"></div>
<div class="a" style="left:172px;top:86px;width:12px;height:280px;background:#E6E7E9;"></div>
<div class="a" style="left:186px;top:86px;width:4px;height:204px;background:#FAE77C;"></div>
<div class="a" style="left:194px;top:86px;width:1px;height:204px;background:#A5A5A5;"></div>
<div class="a" style="left:1263px;top:86px;width:14px;height:280px;background:#E8E8EC;"></div>
<div class="a" style="left:1263px;top:86px;width:14px;height:11px;background:#F5F6F9;border:1px solid #CCCEDB"></div>
<svg class="a" style="left:1265px;top:87px;" width="9" height="9" viewBox="0 0 9 9"><path d="M0.5 4.5h8M4.5 0.5v2.5M4.5 6v2.5M3 1.5l1.5-1 1.5 1M3 7.5l1.5 1 1.5-1" stroke="#1E1E1E" fill="none"/></svg>
<svg class="a" style="left:1266px;top:101px;" width="7" height="4" viewBox="0 0 7 4"><path d="M0 4l3.5-4L7 4z" fill="#868999"/></svg>
<div class="a" style="left:1272px;top:117px;width:4px;height:4px;background:#FF0000;"></div>
<div class="a" style="left:1264px;top:184px;width:3px;height:79px;background:#F5E46E;"></div>
<div class="a" style="left:1267px;top:200px;width:6px;height:89px;background:#C2C3C9;"></div>
<div class="a" style="left:1263px;top:265px;width:14px;height:1px;background:#1E1E8C;"></div>
<svg class="a" style="left:1266px;top:357px;" width="7" height="4" viewBox="0 0 7 4"><path d="M0 0l3.5 4L7 0z" fill="#868999"/></svg>
<svg class="a" style="left:191px;top:122px;" width="7" height="7" viewBox="0 0 7 7"><rect x="0.5" y="0.5" width="5" height="5" stroke="#A5A5A5" fill="#FFFFFF"/><path d="M1.5 3h3" stroke="#555"/></svg>
<svg class="a" style="left:191px;top:175px;" width="7" height="7" viewBox="0 0 7 7"><rect x="0.5" y="0.5" width="5" height="5" stroke="#A5A5A5" fill="#FFFFFF"/><path d="M1.5 3h3" stroke="#555"/></svg>
<div class="a" style="left:197px;top:280.5px;width:1066px;height:10.5px;background:transparent;border:1px solid #E4E4E4"></div>
<div class="a" style="left:194px;top:290px;width:3px;height:1px;background:#A5A5A5;"></div>
<div class="a" style="left:194px;top:108px;width:3px;height:1px;background:#A5A5A5;"></div>
<div class="a" style="left:194px;top:140px;width:3px;height:1px;background:#A5A5A5;"></div>
<div class="a" style="left:194px;top:190px;width:3px;height:1px;background:#A5A5A5;"></div>
<div class="a" style="left:172px;top:86px;width:1090px;height:10px;overflow:hidden">
<div class="t" style="left:26.3px;top:-6.62px;font-family:'Liberation Mono',monospace;font-size:9px;letter-spacing:-0.7px;line-height:1;-webkit-text-stroke:0"><span style="color:#1E1EA8">UPDATE</span> Employees</div>
</div>
<div class="t" style="left:198.3px;top:90.10px;font-family:'Liberation Mono',monospace;font-size:9px;letter-spacing:-0.7px;line-height:1;-webkit-text-stroke:0"><span style="color:#1E1EA8">SET</span><span style="color:#111111"> Salary </span><span style="color:#707070">=</span><span style="color:#111111"> Salary </span><span style="color:#707070">*</span><span style="color:#111111"> 1.05</span></div>
<div class="t" style="left:198.3px;top:100.82px;font-family:'Liberation Mono',monospace;font-size:9px;letter-spacing:-0.7px;line-height:1;-webkit-text-stroke:0"><span style="color:#1E1EA8">WHERE</span><span style="color:#111111"> Department </span><span style="color:#707070">=</span><span style="color:#111111"> </span><span style="color:#C02838">&#x27;Finance&#x27;</span><span style="color:#707070">;</span></div>
<div class="t" style="left:198.3px;top:122.26px;font-family:'Liberation Mono',monospace;font-size:9px;letter-spacing:-0.7px;line-height:1;-webkit-text-stroke:0"><span style="color:#1E1EA8">DELETE</span><span style="color:#111111"> </span><span style="color:#1E1EA8">FROM</span><span style="color:#111111"> Employees</span></div>
<div class="t" style="left:198.3px;top:132.98px;font-family:'Liberation Mono',monospace;font-size:9px;letter-spacing:-0.7px;line-height:1;-webkit-text-stroke:0"><span style="color:#1E1EA8">WHERE</span><span style="color:#111111"> EmployeeID </span><span style="color:#707070">=</span><span style="color:#111111"> 3</span><span style="color:#707070">;</span></div>
<div class="t" style="left:198.3px;top:165.14px;font-family:'Liberation Mono',monospace;font-size:9px;letter-spacing:-0.7px;line-height:1;-webkit-text-stroke:0"><span style="color:#1E1EA8">BEGIN</span><span style="color:#111111"> </span><span style="color:#1E1EA8">TRANSACTION</span><span style="color:#707070">;</span></div>
<div class="t" style="left:198.3px;top:175.86px;font-family:'Liberation Mono',monospace;font-size:9px;letter-spacing:-0.7px;line-height:1;-webkit-text-stroke:0"><span style="color:#1E1EA8">DELETE</span><span style="color:#111111"> </span><span style="color:#1E1EA8">FROM</span><span style="color:#111111"> Employees</span></div>
<div class="t" style="left:198.3px;top:186.58px;font-family:'Liberation Mono',monospace;font-size:9px;letter-spacing:-0.7px;line-height:1;-webkit-text-stroke:0"><span style="color:#1E1EA8">WHERE</span><span style="color:#111111"> Salary </span><span style="color:#707070">&lt;</span><span style="color:#111111"> 50000</span><span style="color:#707070">;</span></div>
<div class="t" style="left:198.3px;top:208.02px;font-family:'Liberation Mono',monospace;font-size:9px;letter-spacing:-0.7px;line-height:1;-webkit-text-stroke:0"><span style="color:#2E7D32">-- Verify the affected rows before committing</span></div>
<div class="t" style="left:198.3px;top:218.74px;font-family:'Liberation Mono',monospace;font-size:9px;letter-spacing:-0.7px;line-height:1;-webkit-text-stroke:0"><span style="color:#1E1EA8">SELECT</span><span style="color:#111111"> </span><span style="color:#707070">*</span><span style="color:#111111"> </span><span style="color:#1E1EA8">FROM</span><span style="color:#111111"> Employees </span><span style="color:#1E1EA8">WHERE</span><span style="color:#111111"> Salary </span><span style="color:#707070">&lt;</span><span style="color:#111111"> 50000</span><span style="color:#707070">;</span></div>
<div class="t" style="left:198.3px;top:240.18px;font-family:'Liberation Mono',monospace;font-size:9px;letter-spacing:-0.7px;line-height:1;-webkit-text-stroke:0"><span style="color:#2E7D32">-- If correct, save changes</span></div>
<div class="t" style="left:198.3px;top:250.90px;font-family:'Liberation Mono',monospace;font-size:9px;letter-spacing:-0.7px;line-height:1;-webkit-text-stroke:0"><span style="color:#1E1EA8">COMMIT</span><span style="color:#707070">;</span></div>
<div class="t" style="left:198.3px;top:272.34px;font-family:'Liberation Mono',monospace;font-size:9px;letter-spacing:-0.7px;line-height:1;-webkit-text-stroke:0"><span style="color:#2E7D32">-- If incorrect, undo</span></div>
<div class="t" style="left:198.3px;top:283.06px;font-family:'Liberation Mono',monospace;font-size:9px;letter-spacing:-0.7px;line-height:1;-webkit-text-stroke:0"><span style="color:#1E1EA8">ROLLBACK</span><span style="color:#707070">;</span></div>
<div class="a" style="left:172px;top:366px;width:1105px;height:12px;background:#E8E8EC;"></div>
<div class="a" style="left:172px;top:366px;width:40px;height:12px;background:#FFFFFF;border:1px solid #CCCEDB"></div>
<svg class="a" style="left:207.5px;top:371px;" width="4" height="2.5" viewBox="0 0 4 2.5"><path d="M0 0h4l-2 2.5z" fill="#1E1E1E"/></svg>
<svg class="a" style="left:217px;top:369px;" width="4" height="7" viewBox="0 0 4 7"><path d="M4 0v7L0 3.5z" fill="#C2C3C9"/></svg>
<svg class="a" style="left:1255px;top:369px;" width="4" height="7" viewBox="0 0 4 7"><path d="M0 0v7l4-3.5z" fill="#C2C3C9"/></svg>
<div class="a" style="left:172px;top:378px;width:1105px;height:17px;background:#F0F0F0;"></div>
<div class="a" style="left:174px;top:381px;width:46px;height:14px;background:#F3F3F3;border:1px solid #E0E0E0;border-bottom:none"></div>
<svg class="a" style="left:180px;top:384px;" width="9" height="9" viewBox="0 0 9 9"><rect x="0.5" y="0.5" width="8" height="8" stroke="#555" fill="none"/><path d="M0.5 2.2h8" stroke="#444" stroke-width="1.2"/><path d="M0.5 4.5h8M0.5 6.5h8M3.2 2v6.5M5.8 2v6.5" stroke="#777" stroke-width="0.7"/></svg>
<div class="a" style="left:220px;top:380px;width:56px;height:15px;background:#FCFCFC;border:1px solid #E3E3E3;border-bottom:none"></div>
<svg class="a" style="left:225px;top:382px;" width="10" height="10" viewBox="0 0 10 10"><rect x="0.5" y="3.5" width="5.5" height="6" stroke="#444" fill="#fff"/><rect x="5" y="0.5" width="4.5" height="7.5" fill="#666"/><rect x="6" y="1.5" width="2.5" height="2" fill="#ccc"/><path d="M2 6l1.5 1.2L2 8.4" stroke="#444" fill="none" stroke-width="0.8"/></svg>
<div class="a" style="left:172px;top:394px;width:1105px;height:1px;background:#E2E2E2;"></div>
<div class="a" style="left:220px;top:394px;width:56px;height:1px;background:#FCFCFC;"></div>
<div class="a" style="left:172px;top:395px;width:1105px;height:245px;background:#FFFFFF;"></div>
<div class="a" style="left:1263px;top:395px;width:14px;height:245px;background:#E8E8EC;"></div>
<svg class="a" style="left:1266px;top:399px;" width="7" height="4" viewBox="0 0 7 4"><path d="M0 4l3.5-4L7 4z" fill="#868999"/></svg>
<div class="a" style="left:1267px;top:406px;width:6px;height:165px;background:#C2C3C9;"></div>
<svg class="a" style="left:1266px;top:631px;" width="7" height="4" viewBox="0 0 7 4"><path d="M0 0l3.5 4L7 0z" fill="#868999"/></svg>
<div class="a" style="left:190px;top:405px;width:84px;height:10px;background:#C8C8C8;"></div>
<div class="t" style="left:190px;top:407.70px;font-family:'Liberation Mono',monospace;font-size:7.8px;color:#000000;line-height:1;-webkit-text-stroke:0.1px currentColor">(0 rows affected)</div>
<div class="a" style="left:190px;top:415px;width:5px;height:10px;background:#C8C8C8;"></div>
<div class="a" style="left:190px;top:425px;width:84px;height:10px;background:#C8C8C8;"></div>
<div class="t" style="left:190px;top:427.70px;font-family:'Liberation Mono',monospace;font-size:7.8px;color:#000000;line-height:1;-webkit-text-stroke:0.1px currentColor">(0 rows affected)</div>
<div class="a" style="left:190px;top:435px;width:173px;height:10px;background:#C8C8C8;"></div>
<div class="t" style="left:190px;top:437.70px;font-family:'Liberation Mono',monospace;font-size:7.8px;color:#D42A3A;line-height:1;-webkit-text-stroke:0.1px currentColor">Msg 3903, Level 16, State 1, Line 47</div>
<div class="a" style="left:190px;top:445px;width:342px;height:10px;background:#C8C8C8;"></div>
<div class="t" style="left:190px;top:447.70px;font-family:'Liberation Mono',monospace;font-size:7.8px;color:#D42A3A;line-height:1;-webkit-text-stroke:0.1px currentColor">The ROLLBACK TRANSACTION request has no corresponding BEGIN TRANSACTION.</div>
<div class="a" style="left:190px;top:455px;width:5px;height:10px;background:#C8C8C8;"></div>
<div class="a" style="left:190px;top:465px;width:234px;height:10px;background:#C8C8C8;"></div>
<div class="t" style="left:190px;top:467.70px;font-family:'Liberation Mono',monospace;font-size:7.8px;color:#000000;line-height:1;-webkit-text-stroke:0.1px currentColor">Completion time: 2025-02-11T04:46:25.3331123+03:00</div>
<div class="a" style="left:172px;top:640px;width:1105px;height:11px;background:#E8E8EC;"></div>
<div class="a" style="left:172px;top:651px;width:1105px;height:2px;background:#F3F4F5;"></div>
<div class="a" style="left:176px;top:640px;width:40px;height:12px;background:#FFFFFF;border:1px solid #CCCEDB"></div>
<svg class="a" style="left:210.5px;top:645px;" width="4" height="2.5" viewBox="0 0 4 2.5"><path d="M0 0h4l-2 2.5z" fill="#1E1E1E"/></svg>
<svg class="a" style="left:221px;top:642px;" width="4" height="7" viewBox="0 0 4 7"><path d="M4 0v7L0 3.5z" fill="#C2C3C9"/></svg>
<svg class="a" style="left:1255px;top:642px;" width="4" height="7" viewBox="0 0 4 7"><path d="M0 0v7l4-3.5z" fill="#C2C3C9"/></svg>
<div class="a" style="left:172px;top:653px;width:1102px;height:16px;background:#EFE48B;"></div>
<div class="a" style="left:172px;top:653px;width:1102px;height:1px;background:#F7F1CF;"></div>
<svg class="a" style="left:175px;top:656px;" width="11" height="10" viewBox="0 0 11 10"><path d="M5.5 0.5L10.5 9.5H0.5z" fill="#F2C029"/><path d="M5.5 3v3.5M5.5 7.5v1" stroke="#1E1E1E" stroke-width="1.2"/></svg>
<div class="a" style="left:985px;top:656px;width:1px;height:11px;background:#B5AD6A;"></div>
<div class="a" style="left:1065px;top:656px;width:1px;height:11px;background:#B5AD6A;"></div>
<div class="a" style="left:1168px;top:656px;width:1px;height:11px;background:#B5AD6A;"></div>
<div class="a" style="left:1201px;top:656px;width:1px;height:11px;background:#B5AD6A;"></div>
<div class="a" style="left:1237px;top:656px;width:1px;height:11px;background:#B5AD6A;"></div>
<div class="a" style="left:0px;top:673px;width:1280px;height:16px;background:#007ACC;"></div>
<svg class="a" style="left:1px;top:676px;" width="10" height="10" viewBox="0 0 10 10"><path d="M0.5 1.5h8.5l-1.5 7.5H0.5" stroke="#FFFFFF" fill="none"/></svg>
<div class="t" style="left:23.70px;top:7.15px;font-family:'Liberation Sans',sans-serif;font-size:8.8px;color:#1E1E1E;transform:scaleX(0.8795);transform-origin:0 0;">test  db.sql - localhost.TestDB (DESKTOP-P702DIO\isaac (58))* - Microsoft SQL Server Management Studio</div>
<div class="t" style="left:1080.70px;top:4.42px;font-family:'Liberation Sans',sans-serif;font-size:8.6px;color:#717171;transform:scaleX(0.9331);transform-origin:0 0;">Quick Launch (Ctrl+Q)</div>
<div class="t" style="left:2.70px;top:22.32px;font-family:'Liberation Sans',sans-serif;font-size:8.6px;color:#1E1E1E;transform:scaleX(0.8298);transform-origin:0 0;">File</div>
<div class="t" style="left:26.70px;top:22.32px;font-family:'Liberation Sans',sans-serif;font-size:8.6px;color:#1E1E1E;transform:scaleX(0.9114);transform-origin:0 0;">Edit</div>
<div class="t" style="left:53.70px;top:22.32px;font-family:'Liberation Sans',sans-serif;font-size:8.6px;color:#1E1E1E;transform:scaleX(0.9197);transform-origin:0 0;">View</div>
<div class="t" style="left:83.70px;top:22.32px;font-family:'Liberation Sans',sans-serif;font-size:8.6px;color:#1E1E1E;transform:scaleX(0.9186);transform-origin:0 0;">Query</div>
<div class="t" style="left:118.20px;top:22.32px;font-family:'Liberation Sans',sans-serif;font-size:8.6px;color:#1E1E1E;transform:scaleX(0.9533);transform-origin:0 0;">Project</div>
<div class="t" style="left:156.70px;top:22.32px;font-family:'Liberation Sans',sans-serif;font-size:8.6px;color:#1E1E1E;transform:scaleX(0.9221);transform-origin:0 0;">Tools</div>
<div class="t" style="left:187.70px;top:22.32px;font-family:'Liberation Sans',sans-serif;font-size:8.6px;color:#1E1E1E;transform:scaleX(0.9974);transform-origin:0 0;">Window</div>
<div class="t" style="left:230.70px;top:22.32px;font-family:'Liberation Sans',sans-serif;font-size:8.6px;color:#1E1E1E;transform:scaleX(0.9894);transform-origin:0 0;">Help</div>
<div class="t" style="left:163.00px;top:38.85px;font-family:'Liberation Sans',sans-serif;font-size:8.8px;color:#1E1E1E;transform:scaleX(0.9136);transform-origin:0 0;">New Query</div>
<div class="t" style="left:974.20px;top:39.35px;font-family:'Liberation Sans',sans-serif;font-size:8.8px;color:#9FA3AC;transform:scaleX(0.8435);transform-origin:0 0;">Back</div>
<div class="t" style="left:47.20px;top:54.95px;font-family:'Liberation Sans',sans-serif;font-size:8.8px;color:#1E1E1E;transform:scaleX(0.8110);transform-origin:0 0;">TestDB</div>
<div class="t" style="left:175.00px;top:55.35px;font-family:'Liberation Sans',sans-serif;font-size:8.8px;color:#1E1E1E;transform:scaleX(0.8712);transform-origin:0 0;">Execute</div>
<div class="t" style="left:2.70px;top:76.15px;font-family:'Liberation Sans',sans-serif;font-size:8.8px;color:#FFFFFF;transform:scaleX(0.8874);transform-origin:0 0;">Object Explorer</div>
<div class="t" style="left:4.60px;top:91.65px;font-family:'Liberation Sans',sans-serif;font-size:8.8px;color:#1E1E1E;transform:scaleX(0.8973);transform-origin:0 0;">Connect</div>
<div class="a" style="left:0;top:0;width:167px;height:689px;overflow:hidden"><div class="t" style="left:29.20px;top:107.05px;font-family:'Liberation Sans',sans-serif;font-size:8.8px;color:#1E1E1E;transform:scaleX(0.8564);transform-origin:0 0;">localhost (SQL Server 16.0.1000.6 - DESKTOP-P702DIO\isaac)</div></div>
<div class="t" style="left:42.40px;top:119.15px;font-family:'Liberation Sans',sans-serif;font-size:8.8px;color:#1E1E1E;transform:scaleX(0.8392);transform-origin:0 0;">Databases</div>
<div class="t" style="left:42.40px;top:131.15px;font-family:'Liberation Sans',sans-serif;font-size:8.8px;color:#1E1E1E;transform:scaleX(0.8747);transform-origin:0 0;">Security</div>
<div class="t" style="left:42.40px;top:143.15px;font-family:'Liberation Sans',sans-serif;font-size:8.8px;color:#1E1E1E;transform:scaleX(0.8644);transform-origin:0 0;">Server Objects</div>
<div class="t" style="left:42.40px;top:155.15px;font-family:'Liberation Sans',sans-serif;font-size:8.8px;color:#1E1E1E;transform:scaleX(0.8913);transform-origin:0 0;">Replication</div>
<div class="t" style="left:42.40px;top:167.15px;font-family:'Liberation Sans',sans-serif;font-size:8.8px;color:#1E1E1E;transform:scaleX(0.9232);transform-origin:0 0;">Always On High Availability</div>
<div class="t" style="left:42.40px;top:179.15px;font-family:'Liberation Sans',sans-serif;font-size:8.8px;color:#1E1E1E;transform:scaleX(0.9229);transform-origin:0 0;">Management</div>
<div class="t" style="left:42.40px;top:191.15px;font-family:'Liberation Sans',sans-serif;font-size:8.8px;color:#1E1E1E;transform:scaleX(0.8858);transform-origin:0 0;">Integration Services Catalogs</div>
<div class="a" style="left:0;top:0;width:167px;height:689px;overflow:hidden"><div class="t" style="left:42.40px;top:203.15px;font-family:'Liberation Sans',sans-serif;font-size:8.8px;color:#1E1E1E;transform:scaleX(0.8660);transform-origin:0 0;">SQL Server Agent (Agent XPs disabled)</div></div>
<div class="t" style="left:42.40px;top:215.15px;font-family:'Liberation Sans',sans-serif;font-size:8.8px;color:#1E1E1E;transform:scaleX(0.8761);transform-origin:0 0;">XEvent Profiler</div>
<div class="a" style="left:172px;top:72px;width:174px;height:12px;overflow:hidden"><div class="t" style="left:2.70px;top:3.82px;font-family:'Liberation Sans',sans-serif;font-size:8.6px;color:#FFFFFF;transform:scaleX(0.8936);transform-origin:0 0;">SQLQuery1.sql - lo...P702DIO\isaac (61))</div></div>
<div class="a" style="left:346px;top:72px;width:174px;height:14px;overflow:hidden"><div class="t" style="left:2.20px;top:3.82px;font-family:'Liberation Sans',sans-serif;font-size:8.6px;color:#1E1E1E;transform:scaleX(0.9100);transform-origin:0 0;">test  db.sql - local...-P702DIO\isaac (58))*</div></div>
<div class="t" style="left:174.20px;top:368.12px;font-family:'Liberation Sans',sans-serif;font-size:8.6px;color:#1E1E1E;transform:scaleX(0.9436);transform-origin:0 0;">100 %</div>
<div class="t" style="left:192.70px;top:384.82px;font-family:'Liberation Sans',sans-serif;font-size:8.6px;color:#1E1E1E;transform:scaleX(0.8201);transform-origin:0 0;">Results</div>
<div class="t" style="left:240.20px;top:384.32px;font-family:'Liberation Sans',sans-serif;font-size:8.6px;color:#1E1E1E;transform:scaleX(0.8041);transform-origin:0 0;">Messages</div>
<div class="t" style="left:177.70px;top:642.52px;font-family:'Liberation Sans',sans-serif;font-size:8.6px;color:#1E1E1E;transform:scaleX(0.9026);transform-origin:0 0;">100 %</div>
<div class="t" style="left:188.20px;top:657.65px;font-family:'Liberation Sans',sans-serif;font-size:8.8px;color:#1E1E1E;transform:scaleX(0.9032);transform-origin:0 0;">Query completed with errors.</div>
<div class="t" style="left:988.70px;top:657.82px;font-family:'Liberation Sans',sans-serif;font-size:8.6px;color:#1E1E1E;transform:scaleX(0.8981);transform-origin:0 0;">localhost (16.0 RTM)</div>
<div class="t" style="left:1068.70px;top:657.82px;font-family:'Liberation Sans',sans-serif;font-size:8.6px;color:#1E1E1E;transform:scaleX(0.8504);transform-origin:0 0;">DESKTOP-P702DIO\isaac ...</div>
<div class="t" style="left:1171.70px;top:657.82px;font-family:'Liberation Sans',sans-serif;font-size:8.6px;color:#1E1E1E;transform:scaleX(0.8844);transform-origin:0 0;">TestDB</div>
<div class="t" style="left:1203.70px;top:657.82px;font-family:'Liberation Sans',sans-serif;font-size:8.6px;color:#1E1E1E;transform:scaleX(0.8818);transform-origin:0 0;">00:00:00</div>
<div class="t" style="left:1240.70px;top:657.82px;font-family:'Liberation Sans',sans-serif;font-size:8.6px;color:#1E1E1E;transform:scaleX(0.9284);transform-origin:0 0;">0 rows</div>
<div class="t" style="left:13.70px;top:678.12px;font-family:'Liberation Sans',sans-serif;font-size:8.6px;color:#FFFFFF;transform:scaleX(0.8654);transform-origin:0 0;">Ready</div>
<div class="t" style="left:771.40px;top:678.12px;font-family:'Liberation Sans',sans-serif;font-size:8.6px;color:#FFFFFF;transform:scaleX(0.9063);transform-origin:0 0;">Ln 47</div>
<div class="t" style="left:833.50px;top:678.12px;font-family:'Liberation Sans',sans-serif;font-size:8.6px;color:#FFFFFF;transform:scaleX(0.9016);transform-origin:0 0;">Col 12</div>
<div class="t" style="left:895.10px;top:678.12px;font-family:'Liberation Sans',sans-serif;font-size:8.6px;color:#FFFFFF;transform:scaleX(0.8894);transform-origin:0 0;">Ch 12</div>
<div class="t" style="left:986.30px;top:678.12px;font-family:'Liberation Sans',sans-serif;font-size:8.6px;color:#FFFFFF;transform:scaleX(0.8515);transform-origin:0 0;">INS</div>
</body></html>
